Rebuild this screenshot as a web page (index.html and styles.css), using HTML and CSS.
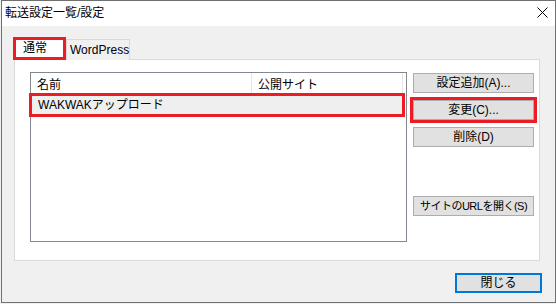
FILE: index.html
```html
<!DOCTYPE html>
<html lang="ja">
<head>
  <meta charset="UTF-8" />
  <title>転送設定一覧/設定</title>
  <link rel="stylesheet" href="styles.css">
</head>
<body>

<div class="window">
  <div class="titlebar">
    <span class="title">転送設定一覧/設定</span>
    <svg class="close-icon" width="11" height="11" viewBox="0 0 11 11">
      <path d="M0.5 0.5 L10.5 10.5 M10.5 0.5 L0.5 10.5" stroke="#000" stroke-width="1" fill="none"/>
    </svg>
  </div>

  <div class="client">
    <div class="tabs">
      <div class="tab active">通常</div>
      <div class="tab">WordPress</div>
    </div>

    <div class="panel">
      <div class="listview">
        <div class="lv-header">
          <div class="col col-name">名前</div>
          <div class="col col-site">公開サイト</div>
        </div>
        <div class="lv-row marked">WAKWAKアップロード</div>
      </div>

      <div class="actions">
        <button class="btn">設定追加(A)...</button>
        <button class="btn marked">変更(C)...</button>
        <button class="btn">削除(D)</button>
        <button class="btn url">サイトのURLを開く(S)</button>
      </div>
    </div>

    <div class="footer">
      <button class="btn default">閉じる</button>
    </div>
  </div>
</div>

</body>
</html>
```

FILE: styles.css
```css
* {
  box-sizing: border-box;
}
body {
  margin: 0;
  background: #f0f0f0;
  font-family: "Liberation Sans", "Noto Sans CJK JP", sans-serif;
  font-size: 12px;
  color: #000;
}
.window {
  width: 555px;
  height: 303px;
  margin-left: 1px;
  border: 1px solid #707070;
  background: #f0f0f0;
  display: flex;
  flex-direction: column;
}
.titlebar {
  height: 25px;
  background: #fff;
  display: flex;
  align-items: center;
  justify-content: space-between;
  padding: 0 7px 1px 3px;
  flex-shrink: 0;
}
.title {
  line-height: 14px;
}
.close-icon {
  display: block;
  margin-top: -1px;
}
.client {
  flex: 1;
  display: flex;
  flex-direction: column;
  padding: 11px 13px 0 12px;
}
.tabs {
  display: flex;
  align-items: flex-end;
  height: 23px;
  margin-left: -1px;
  position: relative;
  z-index: 1;
}
.tab {
  width: 64px;
  height: 21px;
  padding: 0 0 0 3px;
  line-height: 20px;
  border: 1px solid #d9d9d9;
  border-bottom: none;
  background: #f0f0f0;
  white-space: nowrap;
}
.tab.active {
  width: 53px;
  height: 23px;
  padding: 0 0 0 7px;
  line-height: 17px;
  background: #fff;
  border: 3px solid #ec1c24;
}
.panel {
  height: 202px;
  margin: -1px 2px 0 0;
  border: 1px solid #d9d9d9;
  background: #fff;
  display: flex;
  align-items: flex-start;
  padding: 12px 0 0 15px;
}
.listview {
  width: 377px;
  height: 170px;
  border: 1px solid #828790;
  background: #fff;
}
.lv-header {
  display: flex;
  height: 23px;
}
.col {
  padding: 5px 0 0 6px;
  line-height: 14px;
  border-right: 1px solid #e5e5e5;
  height: 20px;
}
.col-name {
  width: 221px;
}
.col-site {
  width: 151px;
}
.lv-row {
  margin: 0 0 0 1px;
  width: 370px;
  height: 18px;
  line-height: 18px;
  padding-left: 6px;
  background: #efefef;
}
.marked {
  outline: 3px solid #ec1c24;
}
.actions {
  display: flex;
  flex-direction: column;
  gap: 7px;
  margin: 1px 0 0 6px;
}
.btn {
  width: 121px;
  height: 20px;
  padding: 0;
  font-family: inherit;
  font-size: 12px;
  line-height: 17px;
  color: #000;
  background: #e1e1e1;
  border: 1px solid #adadad;
  white-space: nowrap;
}
.btn.url {
  margin-top: 42px;
  font-size: 11px;
  letter-spacing: -0.5px;
}
.footer {
  display: flex;
  justify-content: flex-end;
  margin-top: 12px;
}
.btn.default {
  width: 87px;
  border: 2px solid #0078d7;
  line-height: 15px;
}
```
